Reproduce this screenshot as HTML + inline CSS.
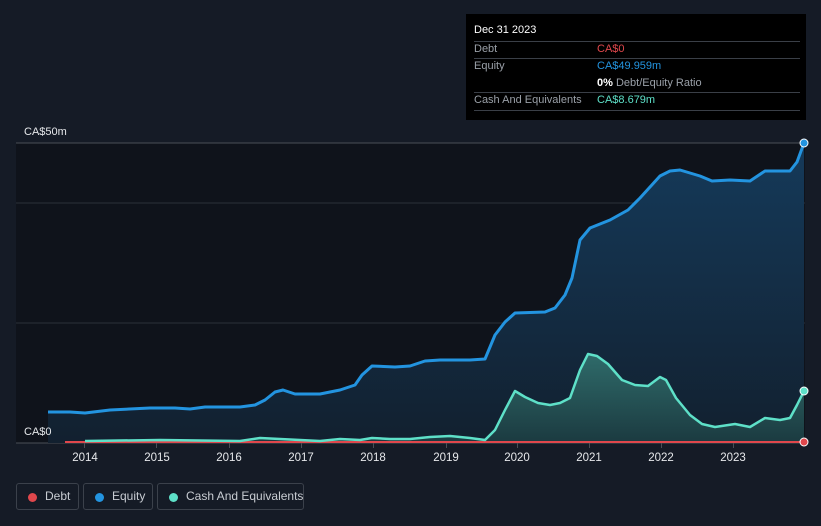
<!DOCTYPE html><html><head><style>
body{margin:0;width:821px;height:526px;background:#151b26;font-family:"Liberation Sans",sans-serif;overflow:hidden;position:relative}
.tt{position:absolute;left:466px;top:14px;width:340px;height:106px;background:#000;font-size:11px}
.tt .r{position:absolute;left:8px;width:326px;border-top:1px solid #3a3f47}
.tt span{position:absolute;white-space:nowrap}
.lg{position:absolute;top:483px;height:27px;border:1px solid #3b414b;border-radius:3px;color:#c8ccd2;font-size:12px;line-height:25px;box-sizing:border-box;white-space:nowrap}
.lg i{position:absolute;left:11px;top:9px;width:9px;height:9px;border-radius:50%}
.lg b{font-weight:normal;position:absolute;left:28px;white-space:nowrap}
</style></head><body>
<svg width="821" height="526" style="position:absolute;left:0;top:0">
<defs><linearGradient id="g" x1="0" y1="0" x2="0" y2="1"><stop offset="0" stop-color="#153a5a"/><stop offset="1" stop-color="#12202f"/></linearGradient>
<linearGradient id="c" x1="0" y1="0" x2="0" y2="1"><stop offset="0" stop-color="#2f6b6a"/><stop offset="1" stop-color="#1b3a40"/></linearGradient></defs>
<rect x="16" y="143" width="789" height="300" fill="#0f131b"/>
<line x1="16" y1="143" x2="805" y2="143" stroke="#4a4f57"/>
<line x1="16" y1="203" x2="805" y2="203" stroke="#2b3039"/>
<line x1="16" y1="323" x2="805" y2="323" stroke="#2b3039"/>
<line x1="16" y1="443" x2="805" y2="443" stroke="#4a4f57"/>
<path d="M48,412 L70,412 85,413 110,410 150,408 175,408 190,409 205,407 240,407 255,405 265,400 275,392 283,390 295,394 320,394 340,390 355,385 362,375 372,366 395,367 410,366 425,361 440,360 470,360 485,359 495,335 505,322 515,313 545,312 555,308 565,295 572,278 580,240 590,228 610,220 628,210 640,198 650,187 660,176 670,171 680,170 700,176 712,181 730,180 750,181 765,171 780,171 790,171 797,162 804,143 L804,443 48,443Z" fill="url(#g)"/>
<path d="M85,441 L160,440 240,441 260,438 300,440 320,441 340,439 360,440 372,438 390,439 410,439 430,437 450,436 470,438 485,440 495,430 505,410 515,391 525,397 538,403 550,405 560,403 570,398 580,370 588,354 597,356 608,364 622,380 635,385 648,386 660,377 666,380 676,398 690,415 702,424 715,427 735,424 750,427 765,418 780,420 790,418 797,405 804,391 L804,443 85,443Z" fill="url(#c)"/>
<path d="M48,412 L70,412 85,413 110,410 150,408 175,408 190,409 205,407 240,407 255,405 265,400 275,392 283,390 295,394 320,394 340,390 355,385 362,375 372,366 395,367 410,366 425,361 440,360 470,360 485,359 495,335 505,322 515,313 545,312 555,308 565,295 572,278 580,240 590,228 610,220 628,210 640,198 650,187 660,176 670,171 680,170 700,176 712,181 730,180 750,181 765,171 780,171 790,171 797,162 804,143" fill="none" stroke="#2394e0" stroke-width="3" stroke-linejoin="round"/>
<line x1="65" y1="442" x2="804" y2="442" stroke="#e0474c" stroke-width="2"/>
<path d="M85,441 L160,440 240,441 260,438 300,440 320,441 340,439 360,440 372,438 390,439 410,439 430,437 450,436 470,438 485,440 495,430 505,410 515,391 525,397 538,403 550,405 560,403 570,398 580,370 588,354 597,356 608,364 622,380 635,385 648,386 660,377 666,380 676,398 690,415 702,424 715,427 735,424 750,427 765,418 780,420 790,418 797,405 804,391" fill="none" stroke="#5ee0c8" stroke-width="2.5" stroke-linejoin="round"/>
<circle cx="804" cy="143" r="4" fill="#2394e0" stroke="#fff" stroke-width="1"/>
<circle cx="804" cy="391" r="4" fill="#5ee0c8" stroke="#fff" stroke-width="1"/>
<circle cx="804" cy="442" r="4" fill="#e0474c" stroke="#fff" stroke-width="1"/>
<g fill="#4a4f57"><rect x="84" y="443" width="1" height="5"/><rect x="156" y="443" width="1" height="5"/><rect x="229" y="443" width="1" height="5"/><rect x="301" y="443" width="1" height="5"/><rect x="373" y="443" width="1" height="5"/><rect x="446" y="443" width="1" height="5"/><rect x="517" y="443" width="1" height="5"/><rect x="589" y="443" width="1" height="5"/><rect x="661" y="443" width="1" height="5"/><rect x="733" y="443" width="1" height="5"/></g>
<g fill="#e6e8eb" font-size="11.5" text-anchor="middle" font-family="Liberation Sans,sans-serif"><text x="85" y="461">2014</text><text x="157" y="461">2015</text><text x="229" y="461">2016</text><text x="301" y="461">2017</text><text x="373" y="461">2018</text><text x="446" y="461">2019</text><text x="517" y="461">2020</text><text x="589" y="461">2021</text><text x="661" y="461">2022</text><text x="733" y="461">2023</text></g>
<text x="24" y="135" fill="#e6e8eb" font-size="11">CA$50m</text>
<text x="24" y="435" fill="#e6e8eb" font-size="11">CA$0</text>
</svg>
<div class="tt">
<span style="left:8px;top:10px;color:#fff">Dec 31 2023</span>
<div class="r" style="top:27px"></div>
<span style="left:8px;top:29px;color:#9aa0a8">Debt</span><span style="left:131px;top:29px;color:#e0474c">CA$0</span>
<div class="r" style="top:44px"></div>
<span style="left:8px;top:46px;color:#9aa0a8">Equity</span><span style="left:131px;top:46px;color:#2394e0">CA$49.959m</span>
<span style="left:131px;top:63px;color:#9aa0a8"><b style="color:#fff">0%</b> Debt/Equity Ratio</span>
<div class="r" style="top:78px"></div>
<span style="left:8px;top:80px;color:#9aa0a8">Cash And Equivalents</span><span style="left:131px;top:80px;color:#5ee0c8">CA$8.679m</span>
<div class="r" style="top:96px"></div>
</div>
<div class="lg" style="left:16px;width:63px"><i style="background:#e0474c"></i><b>Debt</b></div>
<div class="lg" style="left:83px;width:70px"><i style="background:#2394e0"></i><b>Equity</b></div>
<div class="lg" style="left:157px;width:147px"><i style="background:#5ee0c8"></i><b>Cash And Equivalents</b></div>
</body></html>
